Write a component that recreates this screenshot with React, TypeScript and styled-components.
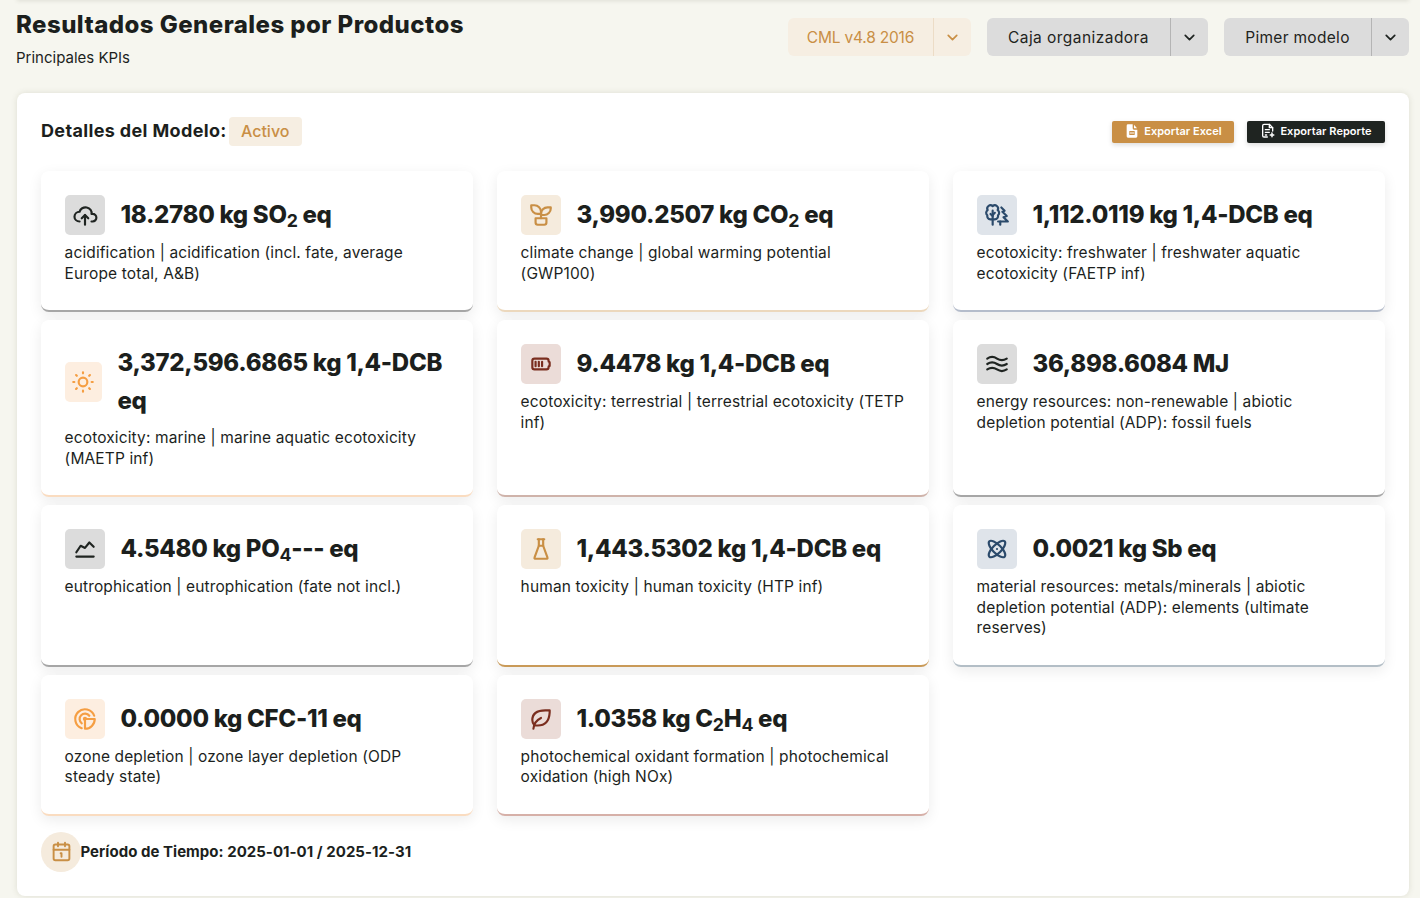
import * as React from 'react'
import styled, { createGlobalStyle } from 'styled-components'
import { ChevronDown, Calendar1 } from 'lucide-react'
import {
  TbAtom,
  TbBattery3,
  TbChartLine,
  TbCloudUpload,
  TbFlask,
  TbLeaf,
  TbPlant,
  TbRadar,
  TbRipple,
  TbSun,
  TbTrees,
} from 'react-icons/tb'

const Global = createGlobalStyle`
  html, body {
    margin: 0;
    height: 898px;
    overflow: hidden;
    background: #f6f6ef;
  }
  * { box-sizing: border-box; }
  body {
    font-family: Inter, "Liberation Sans", sans-serif;
    color: #1c1f1d;
  }
`

const tones = {
  gray: { bg: '#dcdcdc', fg: '#1f2421', line: '#a6a6a6' },
  tan: { bg: '#f5ebdd', fg: '#c98f45', line: '#ecd8bd' },
  tanStrong: { bg: '#f5ebdd', fg: '#c98f45', line: '#c99a58' },
  blue: { bg: '#dfe4ea', fg: '#2b4a6b', line: '#b4bccb' },
  blueGray: { bg: '#dfe4ea', fg: '#2b4a6b', line: '#b3bec6' },
  orange: { bg: '#fdeee0', fg: '#f59e42', line: '#fadcc0' },
  brown: { bg: '#ebdcd8', fg: '#7a2e1f', line: '#cfb3aa' },
  red: { bg: '#ebdcd8', fg: '#7a2e1f', line: '#d6b0a8' },
}

type Tone = keyof typeof tones

const Sub = styled.span`
  font-size: 0.74em;
  font-weight: 700;
  vertical-align: -0.2em;
  line-height: 0;
`

const results: {
  tone: Tone
  icon: React.ReactNode
  value: React.ReactNode
  text: string
}[] = [
  {
    tone: 'gray',
    icon: <TbCloudUpload />,
    value: <>18.2780 kg SO<Sub>2</Sub> eq</>,
    text: 'acidification | acidification (incl. fate, average Europe total, A&B)',
  },
  {
    tone: 'tan',
    icon: <TbPlant />,
    value: <>3,990.2507 kg CO<Sub>2</Sub> eq</>,
    text: 'climate change | global warming potential (GWP100)',
  },
  {
    tone: 'blue',
    icon: <TbTrees />,
    value: '1,112.0119 kg 1,4-DCB eq',
    text: 'ecotoxicity: freshwater | freshwater aquatic ecotoxicity (FAETP inf)',
  },
  {
    tone: 'orange',
    icon: <TbSun />,
    value: '3,372,596.6865 kg 1,4-DCB eq',
    text: 'ecotoxicity: marine | marine aquatic ecotoxicity (MAETP inf)',
  },
  {
    tone: 'brown',
    icon: <TbBattery3 />,
    value: '9.4478 kg 1,4-DCB eq',
    text: 'ecotoxicity: terrestrial | terrestrial ecotoxicity (TETP inf)',
  },
  {
    tone: 'gray',
    icon: <TbRipple />,
    value: '36,898.6084 MJ',
    text: 'energy resources: non-renewable | abiotic depletion potential (ADP): fossil fuels',
  },
  {
    tone: 'gray',
    icon: <TbChartLine />,
    value: <>4.5480 kg PO<Sub>4</Sub>--- eq</>,
    text: 'eutrophication | eutrophication (fate not incl.)',
  },
  {
    tone: 'tanStrong',
    icon: <TbFlask />,
    value: '1,443.5302 kg 1,4-DCB eq',
    text: 'human toxicity | human toxicity (HTP inf)',
  },
  {
    tone: 'blueGray',
    icon: <TbAtom />,
    value: '0.0021 kg Sb eq',
    text: 'material resources: metals/minerals | abiotic depletion potential (ADP): elements (ultimate reserves)',
  },
  {
    tone: 'orange',
    icon: <TbRadar />,
    value: '0.0000 kg CFC-11 eq',
    text: 'ozone depletion | ozone layer depletion (ODP steady state)',
  },
  {
    tone: 'red',
    icon: <TbLeaf />,
    value: <>1.0358 kg C<Sub>2</Sub>H<Sub>4</Sub> eq</>,
    text: 'photochemical oxidant formation | photochemical oxidation (high NOx)',
  },
]

const ExcelIcon = () => (
  <svg width="16" height="16" viewBox="0 0 24 24" fill="currentColor">
    <path d="M6 2h7v6a2 2 0 0 0 2 2h5v10a2 2 0 0 1-2 2H6a2 2 0 0 1-2-2V4a2 2 0 0 1 2-2z" />
    <path d="M15 2.5 19.5 8H15z" />
    <path d="M8 12h8v6H8z M9.5 13.5v1h2v-1z M12.5 13.5v1h2v-1z M9.5 15.5v1h2v-1z M12.5 15.5v1h2v-1z" fill="#c98f45" fillRule="evenodd" />
  </svg>
)

const ReportIcon = () => (
  <svg width="16" height="16" viewBox="0 0 24 24" fill="none" stroke="currentColor" strokeWidth="2" strokeLinecap="round" strokeLinejoin="round">
    <path d="M11 21H6a2 2 0 0 1-2-2V4a2 2 0 0 1 2-2h8l5 5v5" />
    <path d="M14 2v5h5" />
    <path d="M8 10h6 M8 14h6 M8 18h2" />
    <path d="M18 14.5l1 2.5 2.5 1-2.5 1-1 2.5-1-2.5-2.5-1 2.5-1z" fill="currentColor" strokeWidth="1" />
  </svg>
)

export default function App() {
  return (
    <>
      <Global />
      <Page>
        <TopEdge />
        <Header>
          <div>
            <Title>Resultados Generales por Productos</Title>
            <Subtitle>Principales KPIs</Subtitle>
          </div>
          <Selects>
            <Select $accent $width={183}>
              <SelectLabel $track={-0.2}>CML v4.8 2016</SelectLabel>
              <SelectArrow $accent>
                <ChevronDown size={17} strokeWidth={2.4} />
              </SelectArrow>
            </Select>
            <Select $width={221}>
              <SelectLabel $track={0.45}>Caja organizadora</SelectLabel>
              <SelectArrow>
                <ChevronDown size={17} strokeWidth={2.4} />
              </SelectArrow>
            </Select>
            <Select $width={185}>
              <SelectLabel $track={0.3}>Pimer modelo</SelectLabel>
              <SelectArrow>
                <ChevronDown size={17} strokeWidth={2.4} />
              </SelectArrow>
            </Select>
          </Selects>
        </Header>

        <Panel>
          <PanelTop>
            <ModelInfo>
              <ModelLabel>Detalles del Modelo:</ModelLabel>
              <Badge>Activo</Badge>
            </ModelInfo>
            <Actions>
              <ExportButton $width={122} $bg="#c98f45">
                <ExcelIcon />
                Exportar Excel
              </ExportButton>
              <ExportButton $width={138} $bg="#1f2421">
                <ReportIcon />
                Exportar Reporte
              </ExportButton>
            </Actions>
          </PanelTop>

          <Grid>
            {results.map(({ tone, icon, value, text }, key) => (
              <Card key={key} $line={tones[tone].line}>
                <CardHead>
                  <CardIcon $bg={tones[tone].bg} $fg={tones[tone].fg}>
                    {icon}
                  </CardIcon>
                  <CardValue>{value}</CardValue>
                </CardHead>
                <CardText>{text}</CardText>
              </Card>
            ))}
          </Grid>

          <Period>
            <PeriodIcon>
              <Calendar1 size={21} strokeWidth={2.2} />
            </PeriodIcon>
            <PeriodText>Período de Tiempo: 2025-01-01 / 2025-12-31</PeriodText>
          </Period>
        </Panel>
      </Page>
    </>
  )
}

const Page = styled.div`
  height: 898px;
  padding: 0 11px 0 17px;
  overflow: hidden;
`

const TopEdge = styled.div`
  height: 10px;
  margin-top: -10px;
  background: #f6f6ef;
  box-shadow: 0 1px 4px rgba(60, 60, 30, 0.12);
`

const Header = styled.div`
  height: 93px;
  display: flex;
  justify-content: space-between;
  align-items: flex-start;
`

const Title = styled.div`
  margin-left: -1px;
  margin-top: 7px;
  font-size: 24px;
  font-weight: 800;
  line-height: 36px;
  letter-spacing: 0.45px;
  white-space: nowrap;
`

const Subtitle = styled.div`
  margin-left: -1px;
  margin-top: 4px;
  font-size: 15px;
  line-height: 22px;
`

const Selects = styled.div`
  display: flex;
  gap: 16px;
  margin-top: 18px;
`

const Select = styled.div<{ $accent?: boolean; $width: number }>`
  width: ${(p) => p.$width}px;
  height: 38px;
  display: flex;
  border-radius: 6px;
  background: ${(p) => (p.$accent ? '#f6eee2' : '#dcdcdc')};
  color: ${(p) => (p.$accent ? '#c98f45' : '#1f2421')};
  font-size: 15.5px;
  font-weight: 400;
`

const SelectLabel = styled.div<{ $track: number }>`
  flex: 1;
  display: flex;
  align-items: center;
  justify-content: center;
  white-space: nowrap;
  letter-spacing: ${(p) => p.$track}px;
`

const SelectArrow = styled.div<{ $accent?: boolean }>`
  width: 38px;
  display: flex;
  align-items: center;
  justify-content: center;
  border-left: 1px solid ${(p) => (p.$accent ? '#ecdcc6' : '#b4b4b4')};
`

const Panel = styled.div`
  height: 803px;
  background: #fff;
  border-radius: 8px;
  padding: 24px;
  box-shadow: 0 0 6px rgba(70, 70, 30, 0.13);
`

const PanelTop = styled.div`
  height: 29px;
  display: flex;
  justify-content: space-between;
  align-items: center;
  margin-bottom: 25px;
`

const ModelInfo = styled.div`
  display: flex;
  align-items: center;
  gap: 2px;
`

const ModelLabel = styled.div`
  padding-bottom: 2px;
  font-size: 18px;
  font-weight: 700;
  letter-spacing: 0.35px;
`

const Badge = styled.div`
  height: 29px;
  width: 73px;
  padding-bottom: 2px;
  display: flex;
  align-items: center;
  justify-content: center;
  border-radius: 4px;
  background: #f6eee2;
  color: #c98f45;
  font-size: 16px;
  font-weight: 500;
`

const Actions = styled.div`
  display: flex;
  gap: 13px;
`

const ExportButton = styled.div<{ $width: number; $bg: string }>`
  width: ${(p) => p.$width}px;
  height: 22px;
  padding-bottom: 1px;
  display: flex;
  align-items: center;
  justify-content: center;
  gap: 4px;
  border-radius: 2px;
  background: ${(p) => p.$bg};
  color: #fff;
  font-size: 11px;
  font-weight: 600;
  letter-spacing: 0.05px;
  box-shadow: 0 2px 5px rgba(0, 0, 0, 0.14);
`

const Grid = styled.div`
  display: grid;
  grid-template-columns: repeat(3, 432px);
  gap: 8px 24px;
`

const Card = styled.div<{ $line: string }>`
  padding: 24px 24px 26px;
  background: #fff;
  border-radius: 8px;
  border-bottom: 2px solid ${(p) => p.$line};
  box-shadow: 0 4px 14px rgba(0, 0, 0, 0.08);
`

const CardHead = styled.div`
  display: flex;
  align-items: center;
  gap: 15.5px;
  min-height: 40px;
  margin-bottom: 8px;
`

const CardIcon = styled.div<{ $bg: string; $fg: string }>`
  flex-shrink: 1;
  width: 40px;
  height: 40px;
  display: flex;
  align-items: center;
  justify-content: center;
  border-radius: 5px;
  background: ${(p) => p.$bg};
  color: ${(p) => p.$fg};
  font-size: 26px;
`

const CardValue = styled.div`
  font-size: 24px;
  font-weight: 800;
  line-height: 38px;
  letter-spacing: -0.3px;
`

const CardText = styled.div`
  margin-left: -0.4px;
  font-size: 15.5px;
  line-height: 20.5px;
  letter-spacing: 0.12px;
`

const Period = styled.div`
  display: flex;
  align-items: center;
  margin-top: 16px;
`

const PeriodIcon = styled.div`
  width: 40px;
  height: 40px;
  display: flex;
  align-items: center;
  justify-content: center;
  border-radius: 50%;
  background: #f5ebdd;
  color: #c98f45;
`

const PeriodText = styled.div`
  margin-left: -0.5px;
  font-size: 15px;
  font-weight: 700;
  letter-spacing: 0.03px;
`
